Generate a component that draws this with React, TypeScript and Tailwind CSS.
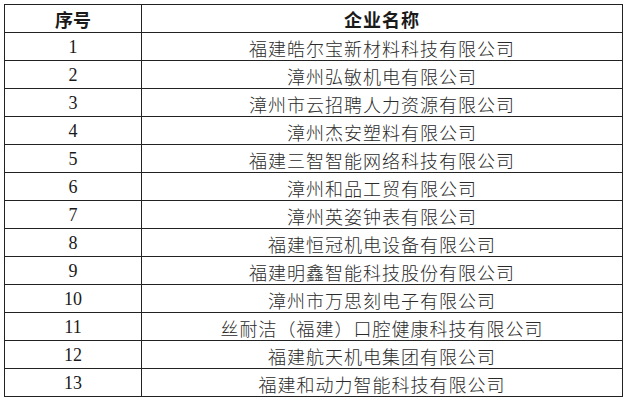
const companies = [
  '福建皓尔宝新材料科技有限公司',
  '漳州弘敏机电有限公司',
  '漳州市云招聘人力资源有限公司',
  '漳州杰安塑料有限公司',
  '福建三智智能网络科技有限公司',
  '漳州和品工贸有限公司',
  '漳州英姿钟表有限公司',
  '福建恒冠机电设备有限公司',
  '福建明鑫智能科技股份有限公司',
  '漳州市万思刻电子有限公司',
  '丝耐洁（福建）口腔健康科技有限公司',
  '福建航天机电集团有限公司',
  '福建和动力智能科技有限公司',
]

export default function App() {
  return (
    <div className="min-h-screen bg-white pl-1 pt-1 font-['Liberation_Serif','Noto_Sans_CJK_SC',serif] text-[18px] text-[#1a1a1a]">
      <table className="w-[619px] border-collapse table-fixed">
        <colgroup>
          <col className="w-[137px]" />
          <col />
        </colgroup>
        <thead>
          {/* Header */}
          <tr className="h-[28px]">
            <th className="border border-[#222] p-0 text-center font-bold leading-none font-['Noto_Sans_CJK_SC',sans-serif]">
              序号
            </th>
            <th className="border border-[#222] p-0 text-center font-bold leading-none tracking-[1px] font-['Noto_Sans_CJK_SC',sans-serif]">
              企业名称
            </th>
          </tr>
        </thead>
        <tbody>
          {companies.map((name, i) => (
            <tr key={name} className="h-[28px]">
              <td className="border border-[#222] p-0 text-center leading-none">{i + 1}</td>
              <td className="border border-[#222] p-0 pt-[2px] text-center leading-none font-light tracking-[1px] text-[#2a2a2a] font-['Noto_Sans_CJK_SC',sans-serif]">
                {name}
              </td>
            </tr>
          ))}
        </tbody>
      </table>
    </div>
  )
}
